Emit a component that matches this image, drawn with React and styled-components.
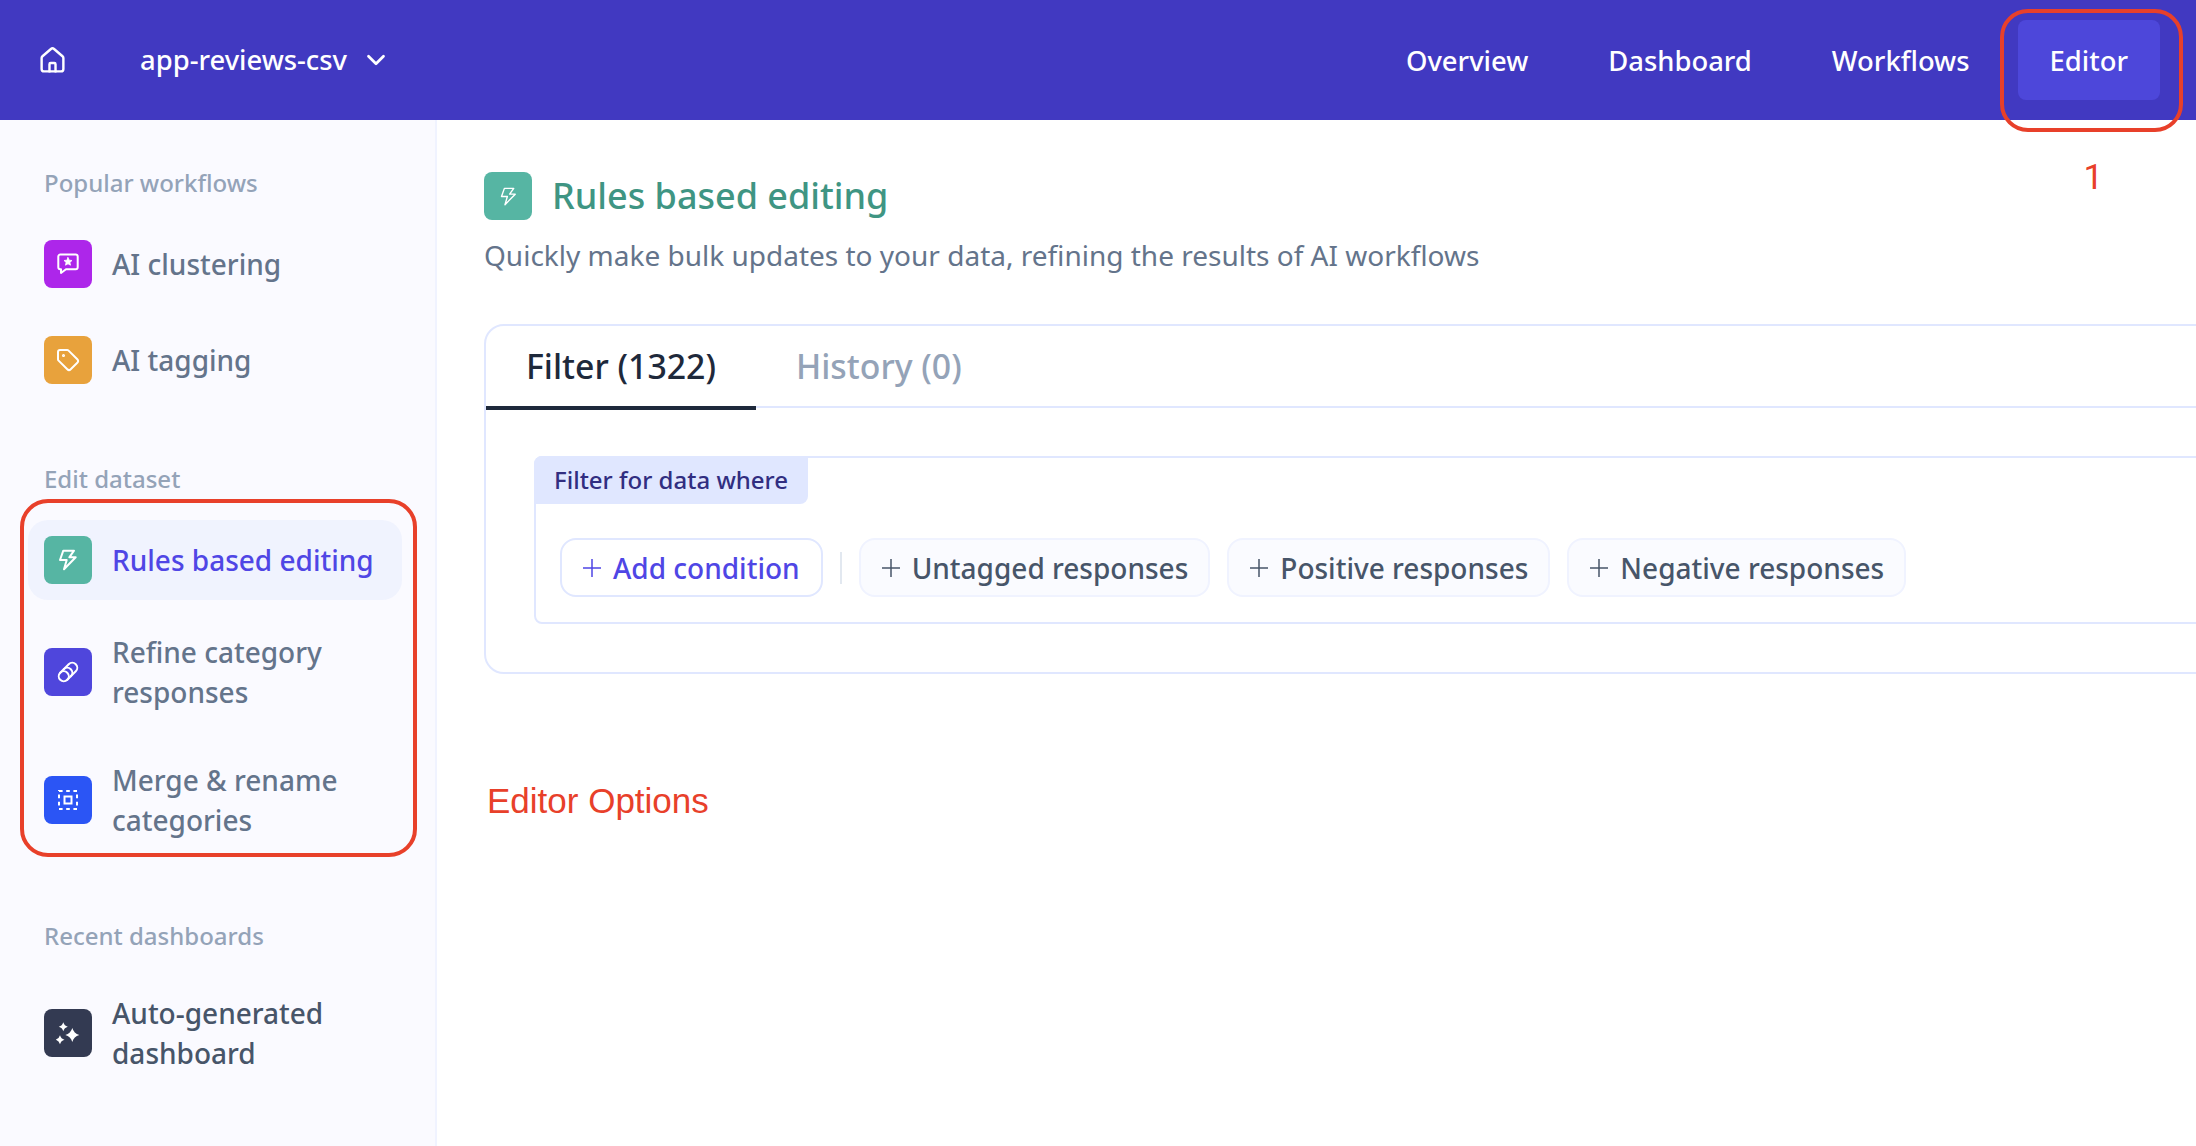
import React from 'react';
import styled, { createGlobalStyle } from 'styled-components';
import { ChevronDown, Tag } from 'lucide-react';

const GlobalStyle = createGlobalStyle`
  html, body { margin: 0; padding: 0; background: #fff; }
  * { box-sizing: border-box; }
  body { font-family: "Noto Sans", "Open Sans", sans-serif; }
`;

const Page = styled.div`
  width: 2196px;
  height: 1146px;
  overflow: hidden;
  display: flex;
  flex-direction: column;
`;

const TopBar = styled.header`
  height: 120px;
  flex: none;
  background: #4139c1;
  color: #fff;
  display: flex;
  align-items: center;
  padding: 0 36px 0 38px;
`;

const HomeLink = styled.a`
  display: flex;
  width: 102px;
`;

const DatasetName = styled.div`
  display: flex;
  align-items: center;
  gap: 14px;
  font-size: 27.4px;
  font-weight: 500;
  line-height: 40px;
`;

const Nav = styled.nav`
  margin-left: auto;
  display: flex;
  align-items: center;
  gap: 16px;
`;

const NavItem = styled.a`
  position: relative;
  height: 80px;
  padding: 0 32px;
  display: flex;
  align-items: center;
  border-radius: 8px;
  font-size: 27.4px;
  font-weight: 500;
  background: ${(p) => (p.$active ? '#4d47da' : 'transparent')};
`;

const NavHighlight = styled.span`
  position: absolute;
  left: -18px;
  right: -23px;
  top: -11px;
  bottom: -32px;
  border: 4px solid #e8402a;
  border-radius: 28px;
`;

const NavNumber = styled.span`
  position: absolute;
  left: 66px;
  top: 137px;
  font-family: Roboto, "Liberation Sans", sans-serif;
  font-size: 35px;
  font-weight: 400;
  color: #e8402a;
`;

const Body = styled.div`
  flex: 1;
  display: flex;
  min-height: 0;
`;

const Sidebar = styled.aside`
  width: 437px;
  flex: none;
  background: #fafaff;
  border-right: 2px solid #f0f3ff;
  padding: 43px 0 0 28px;
`;

const SectionLabel = styled.div`
  height: 40px;
  line-height: 40px;
  padding-left: 16px;
  margin-bottom: 21px;
  font-size: 24px;
  font-weight: 500;
  color: #94a3b8;
`;

const RowGroup = styled.div`
  position: relative;
  display: flex;
  flex-direction: column;
  gap: 16px;
  width: 374px;
  margin-bottom: ${(p) => p.$after}px;
`;

const GroupHighlight = styled.div`
  position: absolute;
  left: -8px;
  right: -15px;
  top: -21px;
  bottom: -1px;
  border: 4px solid #e8402a;
  border-radius: 28px;
  pointer-events: none;
`;

const Row = styled.a`
  display: flex;
  align-items: center;
  gap: 20px;
  padding: 16px;
  border-radius: 20px;
  background: ${(p) => (p.$active ? '#f0f3fe' : 'transparent')};
  color: ${(p) => (p.$active ? '#4f46e5' : p.$dark ? '#475569' : '#64748b')};
  font-size: 28px;
  font-weight: 500;
  line-height: 40px;
`;

const IconBox = styled.span`
  width: 48px;
  height: 48px;
  flex: none;
  border-radius: 8px;
  background: ${(p) => p.$color};
  color: #fff;
  display: flex;
  align-items: center;
  justify-content: center;
`;

const Main = styled.main`
  flex: 1;
  min-width: 0;
  overflow: hidden;
  padding: 52px 0 0 47px;
`;

const TitleRow = styled.div`
  display: flex;
  align-items: center;
  gap: 20px;
  height: 48px;
`;

const Title = styled.h1`
  margin: 0;
  font-size: 36px;
  font-weight: 500;
  line-height: 48px;
  color: #3f9583;
`;

const Subtitle = styled.p`
  margin: 15px 0 49px;
  font-size: 28px;
  line-height: 40px;
  color: #64748b;
`;

const Card = styled.section`
  width: 1800px;
  border: 2px solid #e0e7ff;
  border-radius: 20px;
`;

const Tabs = styled.div`
  display: flex;
  height: 82px;
  border-bottom: 2px solid #e0e7ff;
`;

const TabItem = styled.button`
  height: 84px;
  padding: 0 40px;
  border: none;
  border-bottom: 4px solid ${(p) => (p.$active ? '#1e293b' : 'transparent')};
  background: none;
  font-family: inherit;
  font-size: 33.8px;
  font-weight: 500;
  color: ${(p) => (p.$active ? '#1e293b' : '#94a3b8')};
`;

const CardBody = styled.div`
  padding: 48px 48px 48px;
`;

const FilterBox = styled.div`
  border: 2px solid #e0e7ff;
  border-radius: 8px;
  padding-bottom: 25px;
`;

const FilterLabel = styled.div`
  display: inline-block;
  height: 48px;
  margin: -2px 0 0 -2px;
  padding: 0 20px;
  background: #e0e7ff;
  border-radius: 8px 0 8px 0;
  font-size: 24px;
  font-weight: 500;
  line-height: 48px;
  color: #312e81;
  vertical-align: top;
`;

const ChipRow = styled.div`
  display: flex;
  align-items: center;
  gap: 17px;
  margin: 34px 0 0 24px;
`;

const Chip = styled.button`
  height: 59px;
  display: flex;
  align-items: center;
  gap: 11px;
  padding: 0 ${(p) => (p.$primary ? 21 : 20)}px 0 20px;
  border: 2px solid ${(p) => (p.$primary ? '#e0e7ff' : '#f0f3ff')};
  border-radius: 16px;
  background: ${(p) => (p.$primary ? '#fff' : '#fafbff')};
  color: ${(p) => (p.$primary ? '#4f46e5' : '#475569')};
  font-family: inherit;
  font-size: 28px;
  font-weight: 500;
`;

const Divider = styled.span`
  width: 2px;
  height: 32px;
  background: #e2e8f0;
`;

const EditorOptions = styled.div`
  margin: 99px 0 0 3px;
  font-family: "Liberation Sans", Arial, sans-serif;
  font-size: 35px;
  line-height: 56px;
  color: #e8402a;
`;

const Svg = ({ size = 24, children, ...rest }) => (
  <svg
    width={size}
    height={size}
    viewBox="0 0 24 24"
    fill="none"
    stroke="currentColor"
    strokeWidth="2"
    strokeLinecap="round"
    strokeLinejoin="round"
    {...rest}
  >
    {children}
  </svg>
);

const HomeIcon = () => (
  <Svg size={29}>
    <path d="M14.5 21v-6a1 1 0 0 0-1-1h-3a1 1 0 0 0-1 1v6" />
    <path d="M3 10a2 2 0 0 1 .709-1.528l7-5.999a2 2 0 0 1 2.582 0l7 5.999A2 2 0 0 1 21 10v9a2 2 0 0 1-2 2H5a2 2 0 0 1-2-2z" />
  </Svg>
);

const StarMessageIcon = () => (
  <Svg>
    <path d="M4.3 2.5h15.4a2 2 0 0 1 2 2v10.8a2 2 0 0 1-2 2H10L5 21v-3.7h-.7a2 2 0 0 1-2-2V4.5a2 2 0 0 1 2-2z" />
    <path
      d="M12 5.6l1.2 2.6 2.8.3-2.1 1.9.6 2.8-2.5-1.4-2.5 1.4.6-2.8-2.1-1.9 2.8-.3z"
      fill="currentColor"
      strokeWidth="0.8"
    />
  </Svg>
);

const BoltIcon = ({ size = 24, strokeWidth = 2 }) => (
  <Svg size={size} strokeWidth={strokeWidth}>
    <path d="M7.3 2.7H18l-4.7 6.6h6.4L8 21.3 10.7 12H4z" />
  </Svg>
);

const PillIcon = () => (
  <Svg>
    <g transform="rotate(-45 12 12)">
      <rect x="1" y="7" width="22" height="10" rx="5" />
      <path d="M6 7a5 5 0 0 1 0 10" />
      <path d="M11 7a5 5 0 0 1 0 10" />
    </g>
  </Svg>
);

const MergeIcon = () => (
  <Svg strokeLinecap="butt" strokeLinejoin="miter">
    <rect x="3" y="3" width="18" height="18" strokeDasharray="3.6 3.6" />
    <rect x="8.5" y="8.5" width="7" height="7" />
  </Svg>
);

const sparkle = (x, y, r) => {
  const k = r * 0.22;
  return `M${x} ${y - r}Q${x + k} ${y - k} ${x + r} ${y}Q${x + k} ${y + k} ${x} ${y + r}Q${x - k} ${y + k} ${x - r} ${y}Q${x - k} ${y - k} ${x} ${y - r}z`;
};

const SparklesIcon = () => (
  <svg width="24" height="24" viewBox="0 0 24 24" fill="currentColor">
    <path d={sparkle(16.3, 14, 7)} />
    <path d={sparkle(7.3, 5.7, 4.5)} />
    <path d={sparkle(4, 18.7, 4.5)} />
  </svg>
);

const PlusIcon = ({ size }) => (
  <svg width={size} height={size} viewBox="0 0 20 20" stroke="currentColor" strokeWidth="1.5">
    <path d="M10 1v18M1 10h18" />
  </svg>
);

const App = () => (
  <Page>
    <GlobalStyle />
    <TopBar>
      <HomeLink>
        <HomeIcon />
      </HomeLink>
      <DatasetName>
        app-reviews-csv
        <ChevronDown size={30} strokeWidth={2.2} />
      </DatasetName>
      <Nav>
        <NavItem>Overview</NavItem>
        <NavItem>Dashboard</NavItem>
        <NavItem>Workflows</NavItem>
        <NavItem $active>
          Editor
          <NavHighlight />
          <NavNumber>1</NavNumber>
        </NavItem>
      </Nav>
    </TopBar>
    <Body>
      <Sidebar>
        <SectionLabel>Popular workflows</SectionLabel>
        <RowGroup $after={59}>
          <Row>
            <IconBox $color="#ad26ea">
              <StarMessageIcon />
            </IconBox>
            AI clustering
          </Row>
          <Row>
            <IconBox $color="#e8a23c">
              <Tag size={24} strokeWidth={2} />
            </IconBox>
            AI tagging
          </Row>
        </RowGroup>
        <SectionLabel>Edit dataset</SectionLabel>
        <RowGroup $after={60}>
          <GroupHighlight />
          <Row $active>
            <IconBox $color="#56b5a3">
              <BoltIcon />
            </IconBox>
            Rules based editing
          </Row>
          <Row>
            <IconBox $color="#4f46dc">
              <PillIcon />
            </IconBox>
            <span>
              Refine category
              <br />
              responses
            </span>
          </Row>
          <Row>
            <IconBox $color="#2b55f5">
              <MergeIcon />
            </IconBox>
            <span>
              Merge &amp; rename
              <br />
              categories
            </span>
          </Row>
        </RowGroup>
        <SectionLabel>Recent dashboards</SectionLabel>
        <RowGroup $after={0}>
          <Row $dark>
            <IconBox $color="#333a52">
              <SparklesIcon />
            </IconBox>
            <span>
              Auto-generated
              <br />
              dashboard
            </span>
          </Row>
        </RowGroup>
      </Sidebar>
      <Main>
        <TitleRow>
          <IconBox $color="#56b5a3">
            <BoltIcon size={21} strokeWidth={1.6} />
          </IconBox>
          <Title>Rules based editing</Title>
        </TitleRow>
        <Subtitle>Quickly make bulk updates to your data, refining the results of AI workflows</Subtitle>
        <Card>
          <Tabs>
            <TabItem $active>Filter (1322)</TabItem>
            <TabItem>History (0)</TabItem>
          </Tabs>
          <CardBody>
            <FilterBox>
              <FilterLabel>Filter for data where</FilterLabel>
              <ChipRow>
                <Chip $primary>
                  <PlusIcon size={20} />
                  Add condition
                </Chip>
                <Divider />
                <Chip>
                  <PlusIcon size={20} />
                  Untagged responses
                </Chip>
                <Chip>
                  <PlusIcon size={20} />
                  Positive responses
                </Chip>
                <Chip>
                  <PlusIcon size={20} />
                  Negative responses
                </Chip>
              </ChipRow>
            </FilterBox>
          </CardBody>
        </Card>
        <EditorOptions>Editor Options</EditorOptions>
      </Main>
    </Body>
  </Page>
);

export default App;
